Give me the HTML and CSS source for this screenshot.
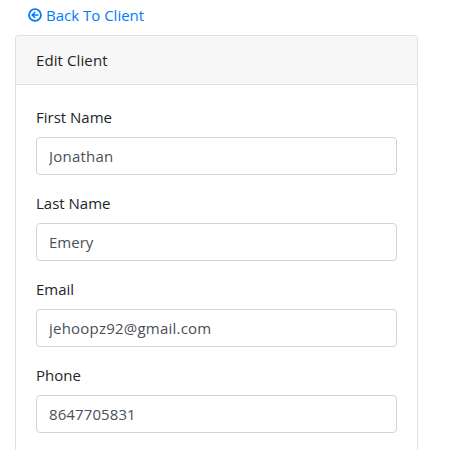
FILE: index.html
```html
<!DOCTYPE html>
<html lang="en">
<head>
<meta charset="utf-8">
<title>Edit Client</title>
<link rel="stylesheet" href="styles.css">
</head>
<body>
<main class="container">
  <a class="back-link" href="#">
    <svg class="back-icon" viewBox="0 0 14 14" fill="none" stroke="currentColor" aria-hidden="true"><circle cx="7" cy="7" r="5.95" stroke-width="1.8"/><path stroke-width="1.6" d="M10.5 7H4.5M7.2 4L4.2 7l3 3"/></svg>
    <span>Back To Client</span>
  </a>
  <section class="card">
    <header class="card-header">Edit Client</header>
    <form class="card-body">
      <div class="form-group"><label for="first">First Name</label><input id="first" class="form-control first" type="text" value="Jonathan"></div>
      <div class="form-group"><label for="last">Last Name</label><input id="last" class="form-control" type="text" value="Emery"></div>
      <div class="form-group"><label for="email">Email</label><input id="email" class="form-control email" type="text" value="jehoopz92@gmail.com"></div>
      <div class="form-group"><label for="phone">Phone</label><input id="phone" class="form-control phone" type="text" value="8647705831"></div>
    </form>
  </section>
</main>
</body>
</html>
```

FILE: styles.css
```css
* { box-sizing: border-box; }
body {
  margin: 0;
  background: #fff;
  color: #212529;
  font: 400 15px/24px "Segoe UI", "Open Sans", "Noto Sans", sans-serif;
}
.container {
  display: flex;
  flex-direction: column;
  width: 403px;
  height: 450px;
  margin-left: 15px;
  padding-top: 3px;
}
.back-link {
  display: flex;
  align-items: center;
  gap: 4px;
  height: 24px;
  margin: 0 0 8px 13px;
  color: #007bff;
  text-decoration: none;
}
.back-icon { width: 14px; height: 14px; }
.card {
  flex: 1;
  border: 1px solid #dfdfdf;
  border-bottom: 0;
  border-radius: 4px 4px 0 0;
}
.card-header {
  height: 49px;
  padding: 12px 20px;
  background: #f7f7f7;
  border-bottom: 1px solid #dfdfdf;
  border-radius: 3px 3px 0 0;
  letter-spacing: 0.1px;
}
.card-body { padding: 20px 20px 0; }
.form-group { margin-bottom: 16px; }
.form-group:last-child { margin-bottom: 0; }
.form-group label { display: block; margin-bottom: 8px; }
.form-control {
  display: block;
  width: 100%;
  height: 38px;
  padding: 6px 12px;
  border: 1px solid #ced4da;
  border-radius: 4px;
  background: #fff;
  color: #495057;
  font: inherit;
}
.first, .email { letter-spacing: 0.22px; }
.phone { letter-spacing: 0.1px; }
```
